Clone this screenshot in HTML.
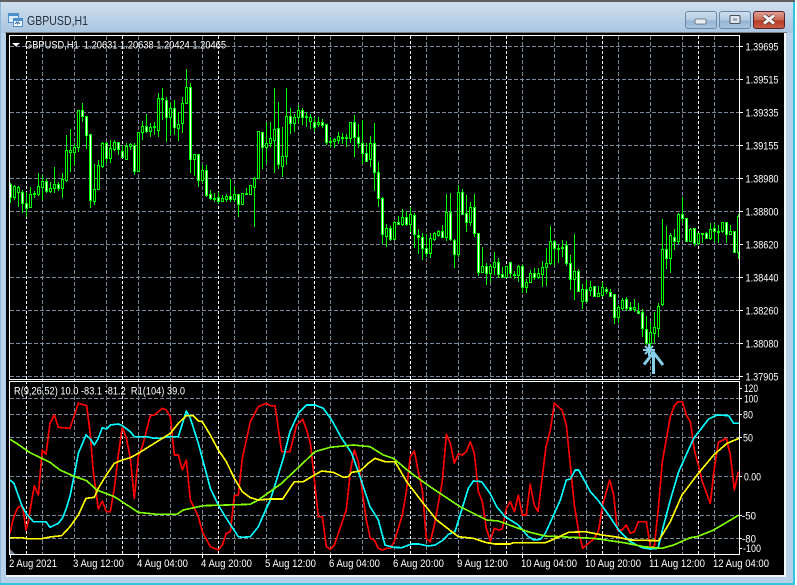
<!DOCTYPE html>
<html><head><meta charset="utf-8"><title>GBPUSD,H1</title>
<style>
html,body{margin:0;padding:0;background:#fff}
body{width:797px;height:585px;overflow:hidden;position:relative}
svg{position:absolute;left:0;top:0;display:block}
text{font-family:"Liberation Sans",sans-serif;fill:#fff;font-size:11px}
</style></head><body>
<svg width="797" height="585" viewBox="0 0 797 585" xmlns="http://www.w3.org/2000/svg">
<defs>
<linearGradient id="tb" x1="0" y1="0" x2="0" y2="1"><stop offset="0" stop-color="#cfdfee"/><stop offset="1" stop-color="#a9c5df"/></linearGradient>
<linearGradient id="bn" x1="0" y1="0" x2="0" y2="1"><stop offset="0" stop-color="#cfdfee"/><stop offset=".5" stop-color="#b4cbe2"/><stop offset=".55" stop-color="#96b4d2"/><stop offset="1" stop-color="#a9c8e2"/></linearGradient>
<linearGradient id="cl" x1="0" y1="0" x2="0" y2="1"><stop offset="0" stop-color="#dfa49a"/><stop offset=".5" stop-color="#c9654f"/><stop offset=".55" stop-color="#b53a22"/><stop offset="1" stop-color="#c9604a"/></linearGradient>
<clipPath id="up"><rect x="10" y="36" width="729" height="343"/></clipPath>
<clipPath id="lo"><rect x="10" y="382" width="729" height="172"/></clipPath>
</defs>
<rect x="0" y="0" width="795" height="585" fill="#b7d1e9"/>
<rect x="0" y="2" width="795" height="31" fill="url(#tb)"/>
<rect x="0" y="0" width="795" height="2" fill="#5f5f5f"/>
<rect x="0" y="583" width="795" height="2" fill="#35c4de"/>
<rect x="793" y="2" width="2" height="583" fill="#35c4de"/>
<rect x="0" y="2" width="1" height="581" fill="#8fb8d8"/>
<rect x="5" y="32" width="782" height="1" fill="#7a7a7a"/>
<rect x="6" y="33" width="780" height="544" fill="#f4f6f8"/>
<rect x="6" y="33" width="778" height="542" fill="#000"/>

<!-- title icon -->
<rect x="8.500" y="13.500" width="10" height="9" fill="#dce9f6" stroke="#4f8fc9"/>
<rect x="9" y="14" width="9" height="2" fill="#4f8fc9"/>
<rect x="13.500" y="18.500" width="9" height="8" fill="#fff" stroke="#4f8fc9"/>
<rect x="14" y="19" width="8" height="2" fill="#4f8fc9"/>
<path d="M15 24l1.500-2 1 2 1-2 1.500 2" fill="none" stroke="#3a6ea5"/>
<text x="27" y="25" style="font-size:12.500px;fill:#24303c" textLength="61" lengthAdjust="spacingAndGlyphs">GBPUSD,H1</text>

<!-- buttons -->
<rect x="685.500" y="11.500" width="31" height="17" rx="2.500" fill="url(#bn)" stroke="#6a87a6"/>
<rect x="695" y="19" width="11" height="5" rx="1" fill="#e8eef4" stroke="#5c6670" stroke-width=".8"/>
<rect x="719.500" y="11.500" width="31" height="17" rx="2.500" fill="url(#bn)" stroke="#6a87a6"/>
<rect x="730" y="15.500" width="10" height="8" rx="1" fill="#dfe6ee" stroke="#47515c"/>
<rect x="733" y="18.500" width="4" height="2" fill="#7f97b0"/>
<rect x="753.500" y="11.500" width="31" height="17" rx="2.500" fill="url(#cl)" stroke="#5b1f2b"/>
<path d="M764 15.500l10 8M774 15.500l-10 8" stroke="#5a3a36" stroke-width="4.600"/>
<path d="M764 15.500l10 8M774 15.500l-10 8" stroke="#f2f2f2" stroke-width="3"/>

<!-- grid -->
<g fill="none" shape-rendering="crispEdges">
<path stroke="#778899" stroke-dasharray="4 2" d="M10 46.500H739M10 79.500H739M10 112.500H739M10 145.500H739M10 178.500H739M10 211.500H739M10 244.500H739M10 277.500H739M10 310.500H739M10 343.500H739M10 376.500H739"/>
<path stroke="#778899" stroke-dasharray="4 2" d="M10 398.500H739M10 414.500H739M10 437.500H739M10 476.500H739M10 515.500H739M10 538.500H739"/>
<path stroke="#778899" stroke-dasharray="4 2" d="M42.500 36V554M74.500 36V554M106.500 36V554M138.500 36V554M170.500 36V554M202.500 36V554M234.500 36V554M266.500 36V554M298.500 36V554M330.500 36V554M362.500 36V554M394.500 36V554M426.500 36V554M458.500 36V554M490.500 36V554M522.500 36V554M554.500 36V554M586.500 36V554M618.500 36V554M650.500 36V554M682.500 36V554M714.500 36V554"/>
<path stroke="#fff" stroke-dasharray="3 2" d="M26.500 36V554M122.500 36V554M218.500 36V554M314.500 36V554M410.500 36V554M506.500 36V554M602.500 36V554M698.500 36V554"/>
</g>

<!-- candles -->
<g clip-path="url(#up)" shape-rendering="crispEdges" stroke="#00ff00" stroke-width="1">
<path fill="none" d="M10.500 183V203M14.500 185V200M18.500 186V207M22.500 190V213M26.500 192V217M30.500 187V207M34.500 191V198M38.500 173V196M42.500 175V200M46.500 179V193M50.500 182V193M54.500 167V193M58.500 182V191M62.500 173V198M66.500 135V182M70.500 129V172M74.500 143V165M78.500 110V152M82.500 103V122M86.500 116V149M90.500 134V208M94.500 164V205M98.500 160V190M102.500 142V168M106.500 142V163M110.500 140V163M114.500 140V151M118.500 142V155M122.500 145V157M126.500 143V159M130.500 143V150M134.500 143V175M138.500 132V171M142.500 121V140M146.500 114V133M150.500 123V137M154.500 122V135M158.500 93V137M162.500 88V120M166.500 97V142M170.500 103V135M174.500 100V135M178.500 112V141M182.500 97V133M186.500 69V103M190.500 83V173M194.500 154V176M198.500 154V187M202.500 165V183M206.500 165V197M210.500 190V200M214.500 193V202M218.500 192V204M222.500 195V202M226.500 194V202M230.500 179V202M234.500 186V202M238.500 194V217M242.500 193V204M246.500 188V194M250.500 185V194M254.500 177V227M258.500 131V178M262.500 132V169M266.500 122V164M270.500 122V147M274.500 88V173M278.500 102V169M282.500 127V177M286.500 88V165M290.500 108V134M294.500 114V132M298.500 105V123M302.500 108V125M306.500 112V127M310.500 114V129M314.500 117V132M318.500 117V127M322.500 119V128M326.500 124V145M330.500 137V147M334.500 138V148M338.500 132V144M342.500 133V144M346.500 134V147M350.500 122V143M354.500 115V157M358.500 124V148M362.500 120V164M366.500 143V161M370.500 136V167M374.500 123V191M378.500 162V207M382.500 197V244M386.500 224V247M390.500 226V241M394.500 221V240M398.500 216V225M402.500 209V226M406.500 211V226M410.500 207V232M414.500 213V248M418.500 229V254M422.500 233V260M426.500 234V257M430.500 233V258M434.500 232V241M438.500 230V237M442.500 225V237M446.500 194V241M450.500 193V241M454.500 239V268M458.500 185V257M462.500 189V215M466.500 195V232M470.500 202V226M474.500 194V237M478.500 233V276M482.500 247V273M486.500 263V285M490.500 264V282M494.500 252V275M498.500 258V278M502.500 267V277M506.500 266V277M510.500 262V278M514.500 271V279M518.500 265V282M522.500 265V293M526.500 279V293M530.500 270V283M534.500 268V280M538.500 268V279M542.500 261V287M546.500 248V286M550.500 226V265M554.500 240V266M558.500 244V263M562.500 240V257M566.500 241V266M570.500 255V290M574.500 234V300M578.500 269V292M582.500 284V309M586.500 280V302M590.500 281V296M594.500 286V297M598.500 286V296M602.500 282V297M606.500 287V294M610.500 289V297M614.500 294V324M618.500 305V323M622.500 298V310M626.500 297V311M630.500 302V311M634.500 299V312M638.500 303V313M642.500 309V337M646.500 316V345M650.500 322V350M654.500 312V343M658.500 303V337M662.500 219V306M666.500 226V269M670.500 233V273M674.500 229V250M678.500 213V244M682.500 197V223M686.500 218V242M690.500 228V242M694.500 228V246M698.500 233V245M702.500 233V243M706.500 232V239M710.500 223V240M714.500 223V242M718.500 225V243M722.500 222V233M726.500 222V243M730.500 225V235M734.500 231V253M738.500 214V259"/>
<path fill="#000" d="M13.500 186.500h2V197.500h-2zM17.500 187.500h2V192.500h-2zM29.500 194.500h2V207.500h-2zM33.500 193.500h2V194.500h-2zM37.500 186.500h2V194.500h-2zM41.500 181.500h2V187.500h-2zM49.500 188.500h2V191.500h-2zM53.500 184.500h2V188.500h-2zM61.500 179.500h2V188.500h-2zM65.500 150.500h2V180.500h-2zM69.500 150.500h2V152.500h-2zM73.500 147.500h2V152.500h-2zM77.500 110.500h2V147.500h-2zM93.500 189.500h2V201.500h-2zM97.500 165.500h2V189.500h-2zM101.500 143.500h2V166.500h-2zM109.500 148.500h2V158.500h-2zM113.500 142.500h2V149.500h-2zM125.500 146.500h2V159.500h-2zM129.500 144.500h2V146.500h-2zM137.500 132.500h2V171.500h-2zM141.500 126.500h2V132.500h-2zM149.500 127.500h2V131.500h-2zM153.500 126.500h2V127.500h-2zM157.500 98.500h2V130.500h-2zM161.500 98.500h2V99.500h-2zM169.500 108.500h2V117.500h-2zM177.500 124.500h2V128.500h-2zM181.500 103.500h2V123.500h-2zM185.500 87.500h2V103.500h-2zM193.500 154.500h2V159.500h-2zM201.500 170.500h2V180.500h-2zM213.500 198.500h2V199.500h-2zM221.500 198.500h2V201.500h-2zM225.500 196.500h2V199.500h-2zM233.500 194.500h2V199.500h-2zM241.500 193.500h2V204.500h-2zM245.500 193.500h2V194.500h-2zM249.500 185.500h2V194.500h-2zM253.500 178.500h2V187.500h-2zM257.500 131.500h2V178.500h-2zM265.500 143.500h2V147.500h-2zM269.500 138.500h2V143.500h-2zM273.500 129.500h2V140.500h-2zM281.500 156.500h2V166.500h-2zM285.500 116.500h2V156.500h-2zM293.500 117.500h2V123.500h-2zM297.500 110.500h2V117.500h-2zM305.500 116.500h2V117.500h-2zM309.500 117.500h2V121.500h-2zM317.500 122.500h2V124.500h-2zM329.500 141.500h2V142.500h-2zM333.500 139.500h2V141.500h-2zM337.500 136.500h2V140.500h-2zM341.500 137.500h2V138.500h-2zM345.500 137.500h2V138.500h-2zM349.500 122.500h2V138.500h-2zM369.500 143.500h2V159.500h-2zM385.500 228.500h2V236.500h-2zM393.500 222.500h2V239.500h-2zM401.500 217.500h2V224.500h-2zM409.500 214.500h2V224.500h-2zM429.500 238.500h2V253.500h-2zM433.500 233.500h2V239.500h-2zM437.500 231.500h2V235.500h-2zM445.500 212.500h2V237.500h-2zM457.500 192.500h2V254.500h-2zM469.500 207.500h2V222.500h-2zM481.500 266.500h2V272.500h-2zM489.500 266.500h2V273.500h-2zM493.500 262.500h2V267.500h-2zM505.500 266.500h2V277.500h-2zM513.500 274.500h2V275.500h-2zM517.500 266.500h2V275.500h-2zM525.500 282.500h2V287.500h-2zM529.500 273.500h2V282.500h-2zM537.500 273.500h2V277.500h-2zM541.500 267.500h2V274.500h-2zM545.500 263.500h2V267.500h-2zM549.500 241.500h2V263.500h-2zM557.500 248.500h2V249.500h-2zM561.500 247.500h2V248.500h-2zM573.500 271.500h2V279.500h-2zM581.500 289.500h2V301.500h-2zM589.500 287.500h2V290.500h-2zM597.500 293.500h2V296.500h-2zM601.500 287.500h2V295.500h-2zM617.500 307.500h2V317.500h-2zM621.500 300.500h2V308.500h-2zM633.500 307.500h2V309.500h-2zM649.500 332.500h2V343.500h-2zM653.500 327.500h2V333.500h-2zM657.500 306.500h2V328.500h-2zM661.500 249.500h2V304.500h-2zM669.500 235.500h2V258.500h-2zM677.500 214.500h2V241.500h-2zM689.500 229.500h2V241.500h-2zM697.500 233.500h2V243.500h-2zM701.500 233.500h2V234.500h-2zM709.500 229.500h2V238.500h-2zM717.500 231.500h2V232.500h-2zM721.500 222.500h2V231.500h-2zM729.500 231.500h2V234.500h-2zM737.500 216.500h2V252.500h-2z"/>
<path fill="#fff" d="M9.500 184.500h2V197.500h-2zM21.500 192.500h2V203.500h-2zM25.500 203.500h2V208.500h-2zM45.500 181.500h2V191.500h-2zM57.500 184.500h2V188.500h-2zM81.500 110.500h2V116.500h-2zM85.500 116.500h2V135.500h-2zM89.500 134.500h2V200.500h-2zM105.500 143.500h2V158.500h-2zM117.500 142.500h2V149.500h-2zM121.500 151.500h2V157.500h-2zM133.500 145.500h2V171.500h-2zM145.500 126.500h2V131.500h-2zM165.500 100.500h2V117.500h-2zM173.500 108.500h2V127.500h-2zM189.500 87.500h2V159.500h-2zM197.500 154.500h2V180.500h-2zM205.500 170.500h2V195.500h-2zM209.500 194.500h2V198.500h-2zM217.500 197.500h2V201.500h-2zM229.500 196.500h2V199.500h-2zM237.500 194.500h2V204.500h-2zM261.500 132.500h2V147.500h-2zM277.500 128.500h2V164.500h-2zM289.500 116.500h2V123.500h-2zM301.500 110.500h2V117.500h-2zM313.500 122.500h2V127.500h-2zM321.500 122.500h2V125.500h-2zM325.500 124.500h2V142.500h-2zM353.500 122.500h2V137.500h-2zM357.500 137.500h2V143.500h-2zM361.500 143.500h2V153.500h-2zM365.500 153.500h2V161.500h-2zM373.500 143.500h2V172.500h-2zM377.500 172.500h2V198.500h-2zM381.500 198.500h2V234.500h-2zM389.500 228.500h2V239.500h-2zM397.500 222.500h2V224.500h-2zM405.500 217.500h2V224.500h-2zM413.500 215.500h2V234.500h-2zM417.500 235.500h2V237.500h-2zM421.500 237.500h2V248.500h-2zM425.500 248.500h2V253.500h-2zM441.500 231.500h2V237.500h-2zM449.500 212.500h2V239.500h-2zM453.500 240.500h2V254.500h-2zM461.500 192.500h2V214.500h-2zM465.500 213.500h2V222.500h-2zM473.500 207.500h2V233.500h-2zM477.500 233.500h2V272.500h-2zM485.500 266.500h2V273.500h-2zM497.500 262.500h2V274.500h-2zM501.500 274.500h2V277.500h-2zM509.500 262.500h2V273.500h-2zM521.500 266.500h2V287.500h-2zM533.500 273.500h2V277.500h-2zM553.500 241.500h2V248.500h-2zM565.500 245.500h2V263.500h-2zM569.500 263.500h2V279.500h-2zM577.500 271.500h2V291.500h-2zM585.500 289.500h2V301.500h-2zM593.500 286.500h2V296.500h-2zM605.500 289.500h2V291.500h-2zM609.500 292.500h2V296.500h-2zM613.500 294.500h2V317.500h-2zM625.500 299.500h2V308.500h-2zM629.500 307.500h2V309.500h-2zM637.500 311.500h2V313.500h-2zM641.500 312.500h2V328.500h-2zM645.500 329.500h2V343.500h-2zM665.500 249.500h2V258.500h-2zM673.500 237.500h2V241.500h-2zM681.500 214.500h2V218.500h-2zM685.500 218.500h2V241.500h-2zM693.500 228.500h2V243.500h-2zM705.500 233.500h2V238.500h-2zM713.500 228.500h2V231.500h-2zM725.500 222.500h2V234.500h-2zM733.500 231.500h2V252.500h-2z"/>
</g>

<!-- signal marks -->
<g stroke="#87ceeb" fill="none" stroke-linecap="butt">
<path stroke-width="2" d="M649 344V356M643 350H655M645 346L653 354M653 346L645 354"/>
<path stroke-width="3" d="M653.500 353V374M644 364.500L653.500 352.500L663 365"/>
</g>

<!-- oscillator lines -->
<g clip-path="url(#lo)" fill="none" stroke-width="5" stroke-linejoin="round" shape-rendering="crispEdges">
<g transform="translate(0 375) scale(.33333)">
<polyline stroke="#f00" points="30,475 40,430 52,400 65,390 72,420 78,465 85,440 92,395 103,332 115,360 127,225 138,238 150,145 163,120 175,157 210,160 235,85 260,92 270,170 280,290 295,402 307,378 319,410 331,410 343,340 355,240 367,155 379,190 391,250 403,370 415,245 427,215 451,122 463,120 487,100 499,105 511,125 523,240 535,240 547,285 559,255 571,375 595,425 607,470 631,515 655,525 667,510 679,475 691,470 703,362 715,360 727,250 751,140 775,95 799,85 810,92"/>
<polyline stroke="#0ff" points="30,315 42,325 65,390 78,415 100,440 138,440 150,457 175,445 187,430 199,400 211,360 223,300 235,235 258,180 271,192 283,210 295,190 307,158 319,162 331,150 355,147 367,152 391,170 403,185 439,185 463,190 487,190 499,185 535,185 559,108 571,130 595,205 607,250 631,340 655,390 679,430 715,485 727,487 751,485 775,455 799,400 810,378"/>
<polyline stroke="#7fff00" points="30,193 50,205 90,233 150,262 180,285 220,303 260,317 290,345 343,365 415,412 470,418 530,418 550,405 610,392 750,388 775,375 810,350"/>
<polyline stroke="#ff0" points="30,488 65,488 80,491 125,491 150,486 185,482 210,455 235,420 258,370 283,367 295,340 319,300 343,265 367,255 391,248 415,235 463,205 511,175 535,145 559,122 580,122 595,138 607,140 631,180 655,225 679,260 703,310 727,350 751,368 775,375 810,372"/>
</g>
<g transform="translate(260 375) scale(.33333)">
<polyline stroke="#f00" points="30,92 45,92 65,230 90,230 110,150 128,133 140,165 152,210 175,425 187,425 199,515 211,523 223,510 247,440 259,405 271,290 283,225 295,260 307,350 319,435 331,490 343,495 355,520 367,525 379,520 391,520 403,500 415,460 427,420 439,350 451,245 463,228 475,290 487,345 499,490 511,500 523,450 547,320 559,178 571,205 583,265 595,237 607,240 619,230 631,200 643,235 655,350 667,380 679,460 691,498 703,460 715,465 727,462 739,400 751,380 763,410 775,360 787,420 799,420 810,330"/>
<polyline stroke="#0ff" points="30,378 45,330 70,250 90,170 115,115 140,90 165,90 190,100 215,135 245,190 275,235 295,290 330,395 355,435 375,510 400,517 425,518 455,507 475,507 505,513 525,510 550,495 565,478 585,470 605,405 625,340 640,318 665,320 690,355 710,395 735,425 775,450 805,485 810,487"/>
<polyline stroke="#7fff00" points="30,350 65,325 165,230 210,217 280,210 330,215 370,240 400,250 450,292 510,335 600,395 680,435 715,438 770,458 810,472"/>
<polyline stroke="#ff0" points="30,372 68,372 103,320 130,320 160,302 185,288 220,292 250,307 265,305 275,292 300,288 325,265 345,250 375,260 405,260 440,320 490,385 530,435 595,485 640,490 680,503 705,507 750,507 760,503 810,503"/>
</g>
<g transform="translate(527 375) scale(.33333)">
<polyline stroke="#f00" points="9,325 22,390 33,410 57,215 70,165 82,85 105,105 118,150 130,270 142,390 155,470 167,520 178,510 203,490 215,465 227,390 248,315 260,360 271,465 285,465 298,450 310,475 322,470 334,440 358,440 370,515 382,515 394,400 406,260 430,125 442,92 454,80 466,80 478,120 490,140 502,225 514,270 526,320 550,385 562,280 574,202 598,190 610,240 622,345 634,290"/>
<polyline stroke="#0ff" points="9,487 20,495 40,493 55,475 80,420 100,375 118,315 130,312 145,285 155,285 190,350 215,378 245,420 275,465 310,500 345,518 370,522 393,520 405,470 430,375 455,290 500,190 545,132 570,120 605,122 620,145 636,145"/>
<polyline stroke="#7fff00" points="9,472 55,483 200,490 290,503 350,515 405,520 440,510 490,488 510,485 560,465 636,420"/>
<polyline stroke="#ff0" points="9,503 55,503 75,495 125,472 175,470 225,480 275,487 310,495 395,497 430,440 465,360 510,300 560,240 600,205 636,190"/>
</g>
</g>
<path d="M10 549L15 554H10z" fill="#778899"/>

<!-- pane borders -->
<g fill="none" stroke="#fff" shape-rendering="crispEdges">
<rect x="9.500" y="35.500" width="730" height="344"/>
<rect x="9.500" y="381.500" width="730" height="173"/>
<path d="M740 46.500h3M740 79.500h3M740 112.500h3M740 145.500h3M740 178.500h3M740 211.500h3M740 244.500h3M740 277.500h3M740 310.500h3M740 343.500h3M740 376.500h3M740 388.500h2M740 398.500h2M740 414.500h2M740 437.500h2M740 476.500h2M740 515.500h2M740 538.500h2M740 548.500h2"/>
<path d="M10.500 555v3M74.500 555v3M138.500 555v3M202.500 555v3M266.500 555v3M330.500 555v3M394.500 555v3M458.500 555v3M522.500 555v3M586.500 555v3M650.500 555v3M714.500 555v3"/>
</g>

<!-- header texts -->
<path d="M12 43h8l-4 3.500z" fill="#fff"/>
<text x="25" y="48.500" textLength="201" lengthAdjust="spacingAndGlyphs" xml:space="preserve">GBPUSD,H1  1.20631 1.20638 1.20424 1.20465</text>
<text x="14" y="394.500" textLength="171" lengthAdjust="spacingAndGlyphs" xml:space="preserve">R(9,26,52) 10.0 -83.1 -81.2  R1(104) 39.0</text>

<!-- price axis -->
<g>
<text x="745.500" y="50.500" textLength="33" lengthAdjust="spacingAndGlyphs">1.39695</text>
<text x="745.500" y="83.500" textLength="33" lengthAdjust="spacingAndGlyphs">1.39515</text>
<text x="745.500" y="116.500" textLength="33" lengthAdjust="spacingAndGlyphs">1.39335</text>
<text x="745.500" y="149.500" textLength="33" lengthAdjust="spacingAndGlyphs">1.39155</text>
<text x="745.500" y="182.500" textLength="33" lengthAdjust="spacingAndGlyphs">1.38980</text>
<text x="745.500" y="215.500" textLength="33" lengthAdjust="spacingAndGlyphs">1.38800</text>
<text x="745.500" y="248.500" textLength="33" lengthAdjust="spacingAndGlyphs">1.38620</text>
<text x="745.500" y="281.500" textLength="33" lengthAdjust="spacingAndGlyphs">1.38440</text>
<text x="745.500" y="314.500" textLength="33" lengthAdjust="spacingAndGlyphs">1.38260</text>
<text x="745.500" y="347.500" textLength="33" lengthAdjust="spacingAndGlyphs">1.38080</text>
<text x="745.500" y="380.500" textLength="33" lengthAdjust="spacingAndGlyphs">1.37905</text>
<text x="744" y="392" textLength="14" lengthAdjust="spacingAndGlyphs">120</text>
<text x="744" y="402.500" textLength="14" lengthAdjust="spacingAndGlyphs">100</text>
<text x="743" y="418.500" textLength="10" lengthAdjust="spacingAndGlyphs">80</text>
<text x="743" y="441.500" textLength="10" lengthAdjust="spacingAndGlyphs">50</text>
<text x="744" y="480.500" textLength="17" lengthAdjust="spacingAndGlyphs">0.00</text>
<text x="742" y="519.500" textLength="14" lengthAdjust="spacingAndGlyphs">-50</text>
<text x="742" y="542.500" textLength="14" lengthAdjust="spacingAndGlyphs">-80</text>
<text x="743" y="552" textLength="18" lengthAdjust="spacingAndGlyphs">-100</text>
</g>

<!-- time axis -->
<g>
<text x="9" y="567" textLength="48" lengthAdjust="spacingAndGlyphs">2 Aug 2021</text>
<text x="73" y="567" textLength="51" lengthAdjust="spacingAndGlyphs">3 Aug 12:00</text>
<text x="137" y="567" textLength="51" lengthAdjust="spacingAndGlyphs">4 Aug 04:00</text>
<text x="201" y="567" textLength="51" lengthAdjust="spacingAndGlyphs">4 Aug 20:00</text>
<text x="265" y="567" textLength="51" lengthAdjust="spacingAndGlyphs">5 Aug 12:00</text>
<text x="329" y="567" textLength="51" lengthAdjust="spacingAndGlyphs">6 Aug 04:00</text>
<text x="393" y="567" textLength="51" lengthAdjust="spacingAndGlyphs">6 Aug 20:00</text>
<text x="457" y="567" textLength="51" lengthAdjust="spacingAndGlyphs">9 Aug 12:00</text>
<text x="521" y="567" textLength="56" lengthAdjust="spacingAndGlyphs">10 Aug 04:00</text>
<text x="585" y="567" textLength="56" lengthAdjust="spacingAndGlyphs">10 Aug 20:00</text>
<text x="649" y="567" textLength="56" lengthAdjust="spacingAndGlyphs">11 Aug 12:00</text>
<text x="713" y="567" textLength="56" lengthAdjust="spacingAndGlyphs">12 Aug 04:00</text>
</g>
</svg>
</body></html>
